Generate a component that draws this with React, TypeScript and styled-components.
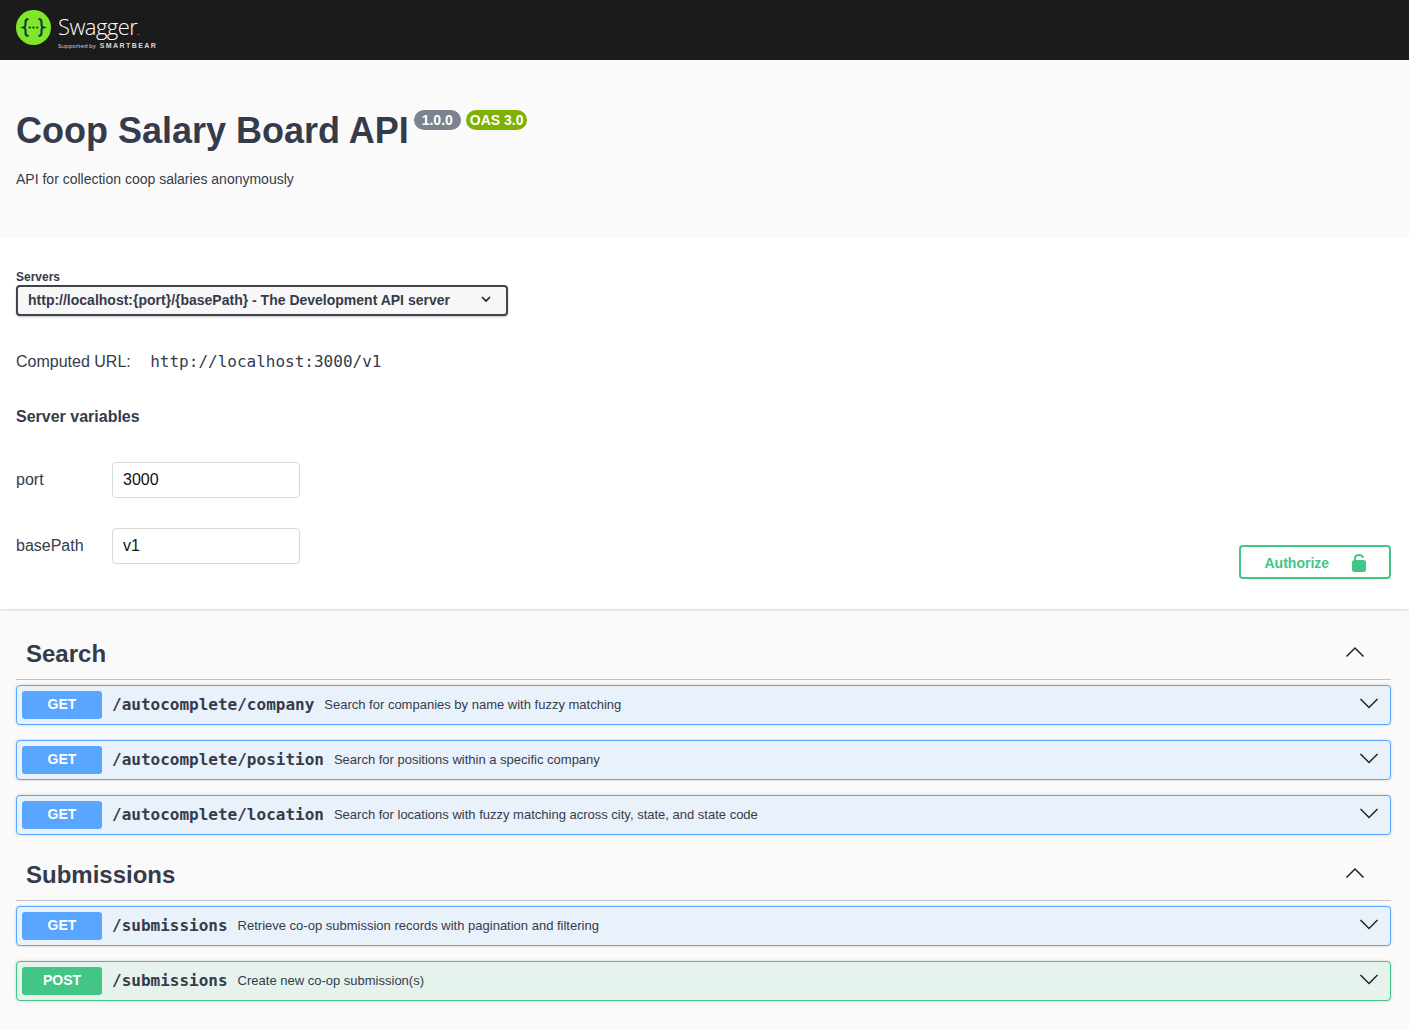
import React from 'react';
import styled, { createGlobalStyle } from 'styled-components';

const sans = '"Liberation Sans", Arial, sans-serif';
const mono = '"DejaVu Sans Mono", "Liberation Mono", monospace';
const ink = '#353b4b';
const green = '#41c686';

type Method = 'GET' | 'POST';

const methodColors: Record<Method, { solid: string; tint: string }> = {
  GET: { solid: '#58a6ff', tint: '#e9f1fa' },
  POST: { solid: green, tint: '#e5f3ec' }
};

const groups: { name: string; ops: { method: Method; path: string; summary: string }[] }[] = [
  {
    name: 'Search',
    ops: [
      { method: 'GET', path: '/autocomplete/company', summary: 'Search for companies by name with fuzzy matching' },
      { method: 'GET', path: '/autocomplete/position', summary: 'Search for positions within a specific company' },
      {
        method: 'GET',
        path: '/autocomplete/location',
        summary: 'Search for locations with fuzzy matching across city, state, and state code'
      }
    ]
  },
  {
    name: 'Submissions',
    ops: [
      { method: 'GET', path: '/submissions', summary: 'Retrieve co-op submission records with pagination and filtering' },
      { method: 'POST', path: '/submissions', summary: 'Create new co-op submission(s)' }
    ]
  }
];

const variables = [
  { name: 'port', value: '3000' },
  { name: 'basePath', value: 'v1' }
];

const Logo = () => (
  <svg width="35" height="35" viewBox="0 0 35 35">
    <circle cx="17.5" cy="17.5" r="17.5" fill="#7fe62a" />
    <path
      d="M12.5 9c-2.6 0-3 1.2-3 3v3c0 1.3-.7 2.1-2 2.5 1.3.4 2 1.2 2 2.5v3c0 1.8.4 3 3 3M22.5 9c2.6 0 3 1.2 3 3v3c0 1.3.7 2.1 2 2.5-1.3.4-2 1.2-2 2.5v3c0 1.800-.4 3-3 3"
      fill="none"
      stroke="#173647"
      strokeWidth="2.1"
    />
    <circle cx="13.8" cy="17.6" r="1.15" fill="#173647" />
    <circle cx="17.5" cy="17.6" r="1.15" fill="#173647" />
    <circle cx="21.2" cy="17.6" r="1.15" fill="#173647" />
  </svg>
);

const Chevron = ({ up }: { up?: boolean }) => (
  <svg width="20" height="20" viewBox="0 0 20 20">
    <path d={up ? 'M1.5 14.5 10 6l8.5 8.5' : 'M1.5 6 10 14.5 18.5 6'} fill="none" stroke="#222" strokeWidth="1.5" />
  </svg>
);

const SmallChevron = () => (
  <svg width="10" height="7" viewBox="0 0 10 7">
    <path d="M1 1l4 4 4-4" fill="none" stroke="#222" strokeWidth="1.7" />
  </svg>
);

const Lock = () => (
  <svg width="14" height="18" viewBox="0 0 14 18">
    <path d="M3 7V4a4 3 0 0 1 8 0" fill="none" stroke={green} strokeWidth="2" />
    <rect x="0" y="6" width="14" height="12" rx="2.5" fill={green} />
  </svg>
);

export default function App() {
  return (
    <>
      <GlobalStyle />
      <Topbar>
        <Logo />
        <Brand>
          <BrandName>
            Swagger<Tm>™</Tm>
          </BrandName>
          <BrandSub>
            <Supported>Supported by</Supported>
            <SmartBear>SMARTBEAR</SmartBear>
          </BrandSub>
        </Brand>
      </Topbar>
      <Info>
        <TitleRow>
          <Title>Coop Salary Board API</Title>
          <Badge color="#7b8290">1.0.0</Badge>
          <Badge color="#7eb100">OAS 3.0</Badge>
        </TitleRow>
        <Description>API for collection coop salaries anonymously</Description>
      </Info>
      <Schemes>
        <ServersCol>
          <ServersLabel>Servers</ServersLabel>
          <ServerSelect>
            <span>http://localhost:{'{port}'}/{'{basePath}'} - The Development API server</span>
            <SmallChevron />
          </ServerSelect>
          <ComputedRow>
            <ComputedLabel>Computed URL:</ComputedLabel>
            <ComputedUrl>http://localhost:3000/v1</ComputedUrl>
          </ComputedRow>
          <VariablesTitle>Server variables</VariablesTitle>
          <Variables>
            {variables.map((v) => (
              <VariableRow key={v.name}>
                <VariableName>{v.name}</VariableName>
                <VariableInput readOnly value={v.value} />
              </VariableRow>
            ))}
          </Variables>
        </ServersCol>
        <AuthorizeButton>
          <span>Authorize</span>
          <Lock />
        </AuthorizeButton>
      </Schemes>
      <Operations>
        {groups.map((group) => (
          <Group key={group.name}>
            <GroupHeader>
              <GroupName>{group.name}</GroupName>
              <GroupToggle>
                <Chevron up />
              </GroupToggle>
            </GroupHeader>
            <OpList>
              {group.ops.map((op) => (
                <Op key={op.method + op.path} method={op.method}>
                  <MethodBadge method={op.method}>{op.method}</MethodBadge>
                  <OpPath>{op.path}</OpPath>
                  <OpSummary>{op.summary}</OpSummary>
                  <OpToggle>
                    <Chevron />
                  </OpToggle>
                </Op>
              ))}
            </OpList>
          </Group>
        ))}
      </Operations>
    </>
  );
}

const GlobalStyle = createGlobalStyle`
  html, body {
    margin: 0;
    padding: 0;
    background: #fafafa;
    font-family: ${sans};
    color: ${ink};
  }
`;

const Topbar = styled.header`
  height: 60px;
  box-sizing: border-box;
  background: #1b1b1b;
  padding: 10px 0 0 16px;
  display: flex;
  align-items: flex-start;
  gap: 7px;
`;

const Brand = styled.div`
  display: flex;
  flex-direction: column;
  color: #fff;
`;

const BrandName = styled.div`
  font-family: "Open Sans", sans-serif;
  font-weight: 300;
  font-size: 22px;
  line-height: 26px;
  letter-spacing: -0.55px;
  height: 26px;
  margin-top: 3px;
`;

const Tm = styled.span`
  font-size: 3px;
  vertical-align: -1px;
`;

const BrandSub = styled.div`
  display: flex;
  align-items: center;
  gap: 4px;
  height: 11px;
  margin-top: 1px;
  color: #d8d8d8;
`;

const Supported = styled.span`
  font-family: "Open Sans", sans-serif;
  font-size: 6px;
  line-height: 10px;
`;

const SmartBear = styled.span`
  font-family: ${sans};
  font-weight: 700;
  font-size: 7px;
  line-height: 10px;
  letter-spacing: 1.4px;
`;

const Info = styled.section`
  height: 177px;
  box-sizing: border-box;
  padding: 50px 16px 0;
  background: #fafafa;
`;

const TitleRow = styled.div`
  display: flex;
  align-items: flex-start;
  gap: 5px;
`;

const Title = styled.h1`
  margin: 0;
  font-size: 36px;
  line-height: 41px;
  font-weight: 700;
  color: ${ink};
`;

const Badge = styled.span<{ color: string }>`
  height: 20px;
  box-sizing: border-box;
  padding: 0 4px;
  min-width: 47px;
  text-align: center;
  border-radius: 10px;
  background: ${(p) => p.color};
  color: #fff;
  font-size: 14px;
  font-weight: 700;
  line-height: 20px;
  white-space: nowrap;
`;

const Description = styled.p`
  margin: 18px 0 0;
  font-size: 14px;
  line-height: 20px;
  color: ${ink};
`;

const Schemes = styled.section`
  height: 372px;
  box-sizing: border-box;
  background: #fff;
  padding: 33px 18px 30px 16px;
  display: flex;
  justify-content: space-between;
  align-items: flex-end;
  box-shadow: 0 1px 2px 0 rgba(0, 0, 0, 0.15);
  position: relative;
`;

const ServersCol = styled.div`
  display: flex;
  flex-direction: column;
  align-self: flex-start;
`;

const ServersLabel = styled.div`
  font-size: 12px;
  font-weight: 700;
  line-height: 15px;
`;

const ServerSelect = styled.div`
  width: 492px;
  height: 31px;
  box-sizing: border-box;
  border: 2px solid #41444e;
  border-radius: 4px;
  background: #f7f7f7;
  box-shadow: 0 1px 2px 0 rgba(0, 0, 0, 0.25);
  padding: 0 15px 2px 10px;
  display: flex;
  align-items: center;
  justify-content: space-between;
  font-size: 14px;
  font-weight: 700;
  color: ${ink};
`;

const ComputedRow = styled.div`
  display: flex;
  align-items: center;
  gap: 20px;
  margin-top: 33px;
  height: 24px;
  font-size: 16px;
`;

const ComputedLabel = styled.span`
  padding-top: 1px;
`;

const ComputedUrl = styled.code`
  font-family: ${mono};
  font-size: 16px;
  margin-left: -0.5px;
`;

const VariablesTitle = styled.h4`
  margin: 32px 0 0;
  font-size: 16px;
  line-height: 24px;
  font-weight: 700;
`;

const Variables = styled.div`
  display: flex;
  flex-direction: column;
  gap: 30px;
  margin-top: 33px;
`;

const VariableRow = styled.div`
  display: flex;
  align-items: center;
  height: 36px;
`;

const VariableName = styled.label`
  width: 96px;
  font-size: 16px;
`;

const VariableInput = styled.input`
  width: 188px;
  height: 36px;
  box-sizing: border-box;
  border: 1px solid #d9d9d9;
  border-radius: 4px;
  background: #fff;
  padding: 0 10px;
  font-family: ${sans};
  font-size: 16px;
  color: #111;
  outline: none;
`;

const AuthorizeButton = styled.button`
  width: 152px;
  height: 34px;
  box-sizing: border-box;
  border: 2px solid ${green};
  border-radius: 4px;
  background: transparent;
  color: ${green};
  font-family: ${sans};
  font-size: 14px;
  font-weight: 700;
  padding: 2px 23px 0 23.5px;
  display: flex;
  align-items: center;
  justify-content: space-between;
`;

const Operations = styled.main`
  padding: 21px 18px 28px 16px;
  display: flex;
  flex-direction: column;
  gap: 16px;
`;

const Group = styled.section`
  display: flex;
  flex-direction: column;
`;

const GroupHeader = styled.div`
  height: 50px;
  box-sizing: border-box;
  border-bottom: 1px solid rgba(59, 65, 81, 0.3);
  padding: 0 26px 1px 10px;
  display: flex;
  align-items: center;
  justify-content: space-between;
`;

const GroupName = styled.h3`
  margin: 0;
  font-size: 24px;
  line-height: 30px;
  font-weight: 700;
  color: ${ink};
`;

const GroupToggle = styled.span`
  display: flex;
  margin-top: -4px;
`;

const OpList = styled.div`
  display: flex;
  flex-direction: column;
  gap: 15px;
  margin-top: 5px;
`;

const Op = styled.div<{ method: Method }>`
  height: 40px;
  box-sizing: border-box;
  border: 1px solid ${(p) => methodColors[p.method].solid};
  border-radius: 4px;
  background: ${(p) => methodColors[p.method].tint};
  box-shadow: 0 0 3px rgba(0, 0, 0, 0.19);
  padding: 0 11px 0 5px;
  display: flex;
  align-items: center;
`;

const MethodBadge = styled.span<{ method: Method }>`
  width: 80px;
  height: 28px;
  flex: none;
  border-radius: 3px;
  background: ${(p) => methodColors[p.method].solid};
  color: #fff;
  font-size: 14px;
  font-weight: 700;
  line-height: 26px;
  text-align: center;
`;

const OpPath = styled.span`
  margin: 0 0 2px 10px;
  font-family: ${mono};
  font-size: 16px;
  font-weight: 700;
  color: ${ink};
`;

const OpSummary = styled.span`
  margin: 0 0 2px 10px;
  font-size: 13px;
  color: ${ink};
`;

const OpToggle = styled.span`
  margin-left: auto;
  display: flex;
  margin-top: -4px;
`;
